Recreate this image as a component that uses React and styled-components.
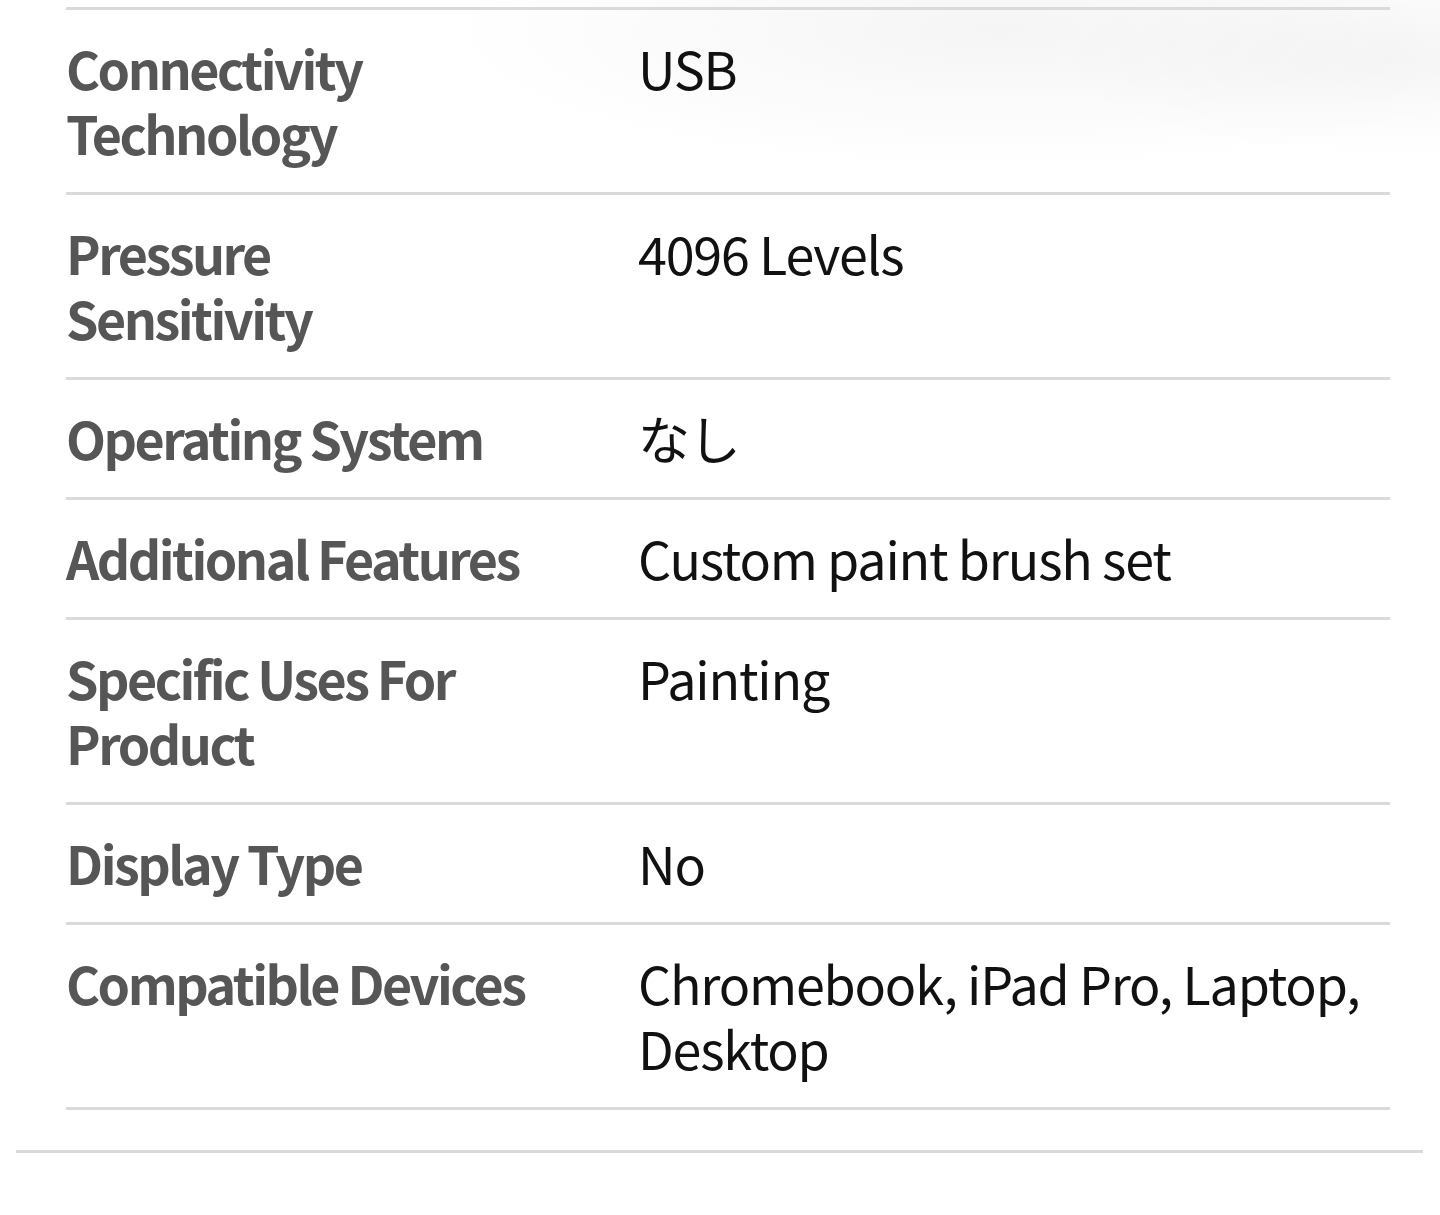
import React from "react";
import styled, { createGlobalStyle } from "styled-components";

const Global = createGlobalStyle`
  html, body { margin: 0; padding: 0; background: #ffffff; }
  body { font-family: "Noto Sans CJK JP", "Noto Sans", sans-serif; }
`;

const Page = styled.div`
  min-height: 1215px;
  padding: 7px 17px 0 16px;
  box-sizing: border-box;
  background:
    radial-gradient(ellipse 800px 200px at 1000px 30px, rgba(0,0,0,0.04), rgba(0,0,0,0) 70%),
    radial-gradient(ellipse 500px 140px at 1400px 60px, rgba(0,0,0,0.03), rgba(0,0,0,0) 70%),
    #ffffff;
`;

const Section = styled.section`
  border-bottom: 3px solid #dadada;
  padding: 0 33px 40px 50px;
`;

const Table = styled.div`
  display: flex;
  flex-direction: column;
`;

const Row = styled.div`
  display: grid;
  grid-template-columns: 572px 1fr;
  border-top: 3px solid #dadada;
  padding: 25px 0 27px;
  &:last-child { border-bottom: 3px solid #dadada; }
`;

const Label = styled.div`
  font-size: 52px;
  line-height: 65px;
  font-weight: 700;
  letter-spacing: -2.5px;
  color: #565656;
  padding-right: 40px;
`;

const Value = styled.div`
  font-size: 52px;
  line-height: 65px;
  font-weight: 400;
  letter-spacing: -1.2px;
  color: #111111;
`;

const specs = [
  ["Connectivity Technology", "USB", 330],
  ["Pressure Sensitivity", "4096 Levels", 330],
  ["Operating System", "なし"],
  ["Additional Features", "Custom paint brush set"],
  ["Specific Uses For Product", "Painting", 420],
  ["Display Type", "No"],
  ["Compatible Devices", "Chromebook, iPad Pro, Laptop, Desktop"],
];

export default function App() {
  return (
    <>
      <Global />
      <Page>
        <Section>
          <Table>
            {specs.map(([k, v, w]) => (
              <Row key={k}>
                <Label style={w ? { maxWidth: w } : undefined}>{k}</Label>
                <Value>{v}</Value>
              </Row>
            ))}
          </Table>
        </Section>
      </Page>
    </>
  );
}
